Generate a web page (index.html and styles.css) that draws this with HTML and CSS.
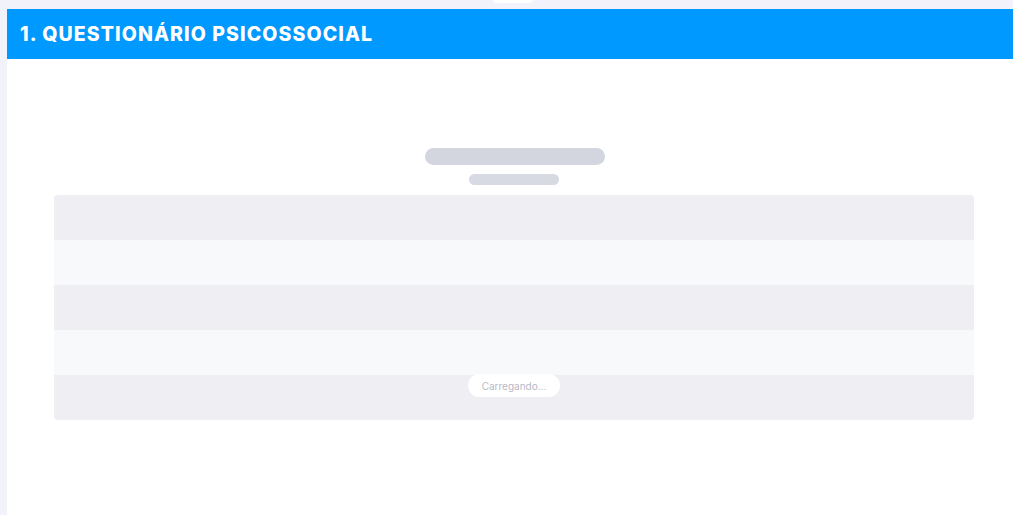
FILE: index.html
```html
<!DOCTYPE html>
<html lang="pt">
<head>
<meta charset="utf-8">
<title>Questionário Psicossocial</title>
<link rel="stylesheet" href="styles.css">
</head>
<body>
<div class="page">
  <div class="top-tab"></div>
  <section class="panel">
    <header class="panel-header">
      <h1>1. QUESTIONÁRIO PSICOSSOCIAL</h1>
    </header>
    <div class="panel-body">
      <div class="skeleton-title"></div>
      <div class="skeleton-sub"></div>
      <div class="table-skeleton">
        <div class="row dark"></div>
        <div class="row light"></div>
        <div class="row dark"></div>
        <div class="row light"></div>
        <div class="row dark"></div>
        <div class="loading">Carregando...</div>
      </div>
    </div>
  </section>
</div>
</body>
</html>
```
FILE: styles.css
```css
html, body {
  margin: 0;
  padding: 0;
  background: #f2f2fb;
  font-family: Inter, "Noto Sans", sans-serif;
}
.page {
  position: relative;
  width: 1013px;
  height: 515px;
  padding: 9px 0 0 7px;
  box-sizing: border-box;
  overflow: hidden;
}
.top-tab {
  position: absolute;
  left: 493px;
  top: -6px;
  width: 40px;
  height: 9px;
  background: #ffffff;
  border-radius: 4px;
}
.panel {
  background: #ffffff;
  height: 506px;
  display: flex;
  flex-direction: column;
}
.panel-header {
  background: #0099ff;
  height: 50px;
  display: flex;
  align-items: center;
  padding-left: 13px;
}
.panel-header h1 {
  margin: 0;
  color: #ffffff;
  font-size: 19.5px;
  font-weight: 800;
  letter-spacing: 1.1px;
}
.panel-body {
  display: flex;
  flex-direction: column;
  align-items: center;
  padding-top: 89px;
}
.skeleton-title {
  width: 180px;
  height: 17px;
  border-radius: 9px;
  background: #d3d5df;
  margin-left: 9px;
}
.skeleton-sub {
  width: 90px;
  height: 11px;
  border-radius: 6px;
  background: #d8dae3;
  margin-top: 9px;
  margin-left: 8px;
}
.table-skeleton {
  position: relative;
  margin-top: 10px;
  width: 920px;
  margin-left: 8px;
  border-radius: 4px;
  overflow: hidden;
  display: flex;
  flex-direction: column;
}
.row {
  height: 45px;
}
.row.dark { background: #efeff3; }
.row.light { background: #f8f9fb; }
.loading {
  position: absolute;
  left: 414px;
  top: 179px;
  width: 92px;
  height: 23px;
  border-radius: 12px;
  background: #ffffff;
  color: #b7b9c6;
  font-size: 10px;
  display: flex;
  align-items: center;
  justify-content: center;
}
```
